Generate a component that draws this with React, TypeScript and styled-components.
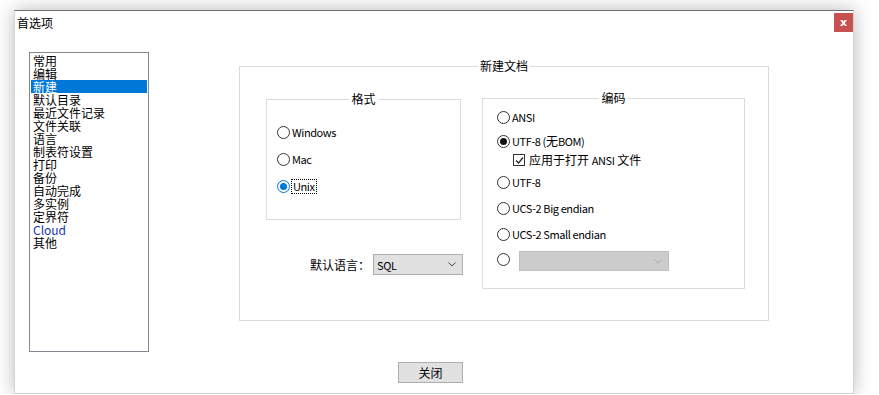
import styled, { createGlobalStyle } from "styled-components";

const GlobalStyle = createGlobalStyle`
  body {
    margin: 0;
    background: #fff;
    font-family: "Noto Sans CJK SC", "Noto Sans", sans-serif;
    font-size: 12px;
    color: #000;
  }
`;

const Dialog = styled.div`
  width: 840px;
  height: 384px;
  margin: 10px 0 0 14px;
  box-sizing: border-box;
  background: #fff;
  border: 1px solid #d4d4d4;
  border-top-color: #6f6f6f;
  box-shadow: 0 0 18px rgba(0, 0, 0, 0.28);
  display: flex;
  flex-direction: column;
`;

const TitleBar = styled.div`
  height: 30px;
  display: flex;
  justify-content: space-between;
  align-items: flex-start;
  padding-left: 2px;
`;

const Title = styled.div`
  margin-top: 2px;
  line-height: 20px;
`;

const CloseButton = styled.div`
  width: 19px;
  height: 19px;
  margin-top: 2px;
  background: #c75050;
  color: #fff;
  font-family: "DejaVu Sans", sans-serif;
  font-weight: bold;
  font-size: 11px;
  display: flex;
  align-items: center;
  justify-content: center;
`;

const Body = styled.div`
  display: flex;
  align-items: flex-start;
  padding: 11px 0 0 14px;
`;

const List = styled.ul`
  width: 120px;
  height: 300px;
  box-sizing: border-box;
  margin: 0;
  padding: 1px;
  list-style: none;
  border: 1px solid #828790;
`;

const ListItem = styled.li<{ $selected?: boolean; $link?: boolean }>`
  line-height: 13px;
  height: 13px;
  padding-left: 2px;
  background: ${(p) => (p.$selected ? "#0078d7" : "transparent")};
  color: ${(p) => (p.$selected ? "#fff" : p.$link ? "#1533b8" : "#000")};
`;

const Main = styled.div`
  margin: 7px 0 0 90px;
`;

const GroupBox = styled.fieldset<{ $w: number; $h: number }>`
  width: ${(p) => p.$w}px;
  height: ${(p) => p.$h}px;
  box-sizing: border-box;
  margin: 0;
  padding: 0;
  min-inline-size: 0;
  border: 1px solid #dcdcdc;
`;

const Legend = styled.legend`
  margin: 0 auto;
  padding: 0 2px;
  line-height: 14px;
`;

const OuterRow = styled.div`
  display: flex;
  align-items: flex-start;
  gap: 19px;
  padding: 18px 0 0 26px;
`;

const LeftColumn = styled.div`
  width: 197px;
  margin-top: 1px;
  display: flex;
  flex-direction: column;
`;

const FormatOptions = styled.div`
  display: flex;
  flex-direction: column;
  gap: 13px;
  padding: 19px 0 0 10px;
`;

const EncodingOptions = styled.div`
  display: flex;
  flex-direction: column;
  padding: 0 0 0 14px;
`;

const OptionRow = styled.div<{ $top?: number; $indent?: number }>`
  display: flex;
  align-items: center;
  gap: 2px;
  height: 14px;
  line-height: 14px;
  margin-top: ${(p) => p.$top ?? 0}px;
  padding-left: ${(p) => p.$indent ?? 0}px;
`;

// Latin captions in the dialog are set in a condensed face
const Latin = styled.span`
  font-size: 11px;
  letter-spacing: -0.4px;
`;

const OtherRow = styled.div`
  display: flex;
  align-items: flex-start;
  margin-top: 10px;
  height: 20px;
`;

const Radio = styled.span<{ $checked?: boolean; $focus?: boolean }>`
  width: 13px;
  height: 13px;
  box-sizing: border-box;
  border-radius: 50%;
  border: 1px solid ${(p) => (p.$focus ? "#0078d7" : "#333")};
  background: #fff;
  flex-shrink: 0;
  display: flex;
  align-items: center;
  justify-content: center;

  &::after {
    content: "";
    display: ${(p) => (p.$checked ? "block" : "none")};
    width: 7px;
    height: 7px;
    border-radius: 50%;
    background: ${(p) => (p.$focus ? "#0078d7" : "#111")};
  }
`;

const OtherRadio = styled(Radio)`
  margin-top: 2px;
`;

const FocusLabel = styled(Latin)`
  outline: 1px dotted #000;
  outline-offset: 0;
  padding: 0 1px;
  line-height: 13px;
`;

const Checkbox = styled.span`
  width: 12px;
  height: 12px;
  box-sizing: border-box;
  border: 1px solid #333;
  background: #fff;
  flex-shrink: 0;
  margin-right: 2px;
  display: flex;
  align-items: center;
  justify-content: center;
`;

const LanguageRow = styled.div`
  display: flex;
  justify-content: flex-end;
  align-items: center;
  gap: 3px;
  margin-top: 34px;
`;

const Select = styled.div<{ $w: number; $h: number; $disabled?: boolean }>`
  width: ${(p) => p.$w}px;
  height: ${(p) => p.$h}px;
  box-sizing: border-box;
  background: ${(p) => (p.$disabled ? "#cccccc" : "#e1e1e1")};
  border: 1px solid ${(p) => (p.$disabled ? "#bfbfbf" : "#adadad")};
  display: flex;
  align-items: center;
  justify-content: space-between;
  padding: 0 6px 0 3px;
  line-height: 14px;
`;

const DisabledSelect = styled(Select)`
  margin-left: 9px;
`;

const Footer = styled.div`
  display: flex;
  justify-content: center;
  padding-right: 7px;
  margin-top: 10px;
`;

const Button = styled.div`
  width: 65px;
  height: 21px;
  box-sizing: border-box;
  background: #e1e1e1;
  border: 1px solid #adadad;
  display: flex;
  align-items: center;
  justify-content: center;
  line-height: 14px;
`;

const Chevron = ({ color }: { color: string }) => (
  <svg width="8" height="5" viewBox="0 0 8 5">
    <polyline points="0.5,0.5 4,4 7.5,0.5" fill="none" stroke={color} strokeWidth="1" />
  </svg>
);

const CheckMark = () => (
  <svg width="9" height="9" viewBox="0 0 9 9">
    <polyline points="1,4.5 3.5,7 8,1.5" fill="none" stroke="#222" strokeWidth="1.2" />
  </svg>
);

const pages = [
  "常用",
  "编辑",
  "新建",
  "默认目录",
  "最近文件记录",
  "文件关联",
  "语言",
  "制表符设置",
  "打印",
  "备份",
  "自动完成",
  "多实例",
  "定界符",
  "Cloud",
  "其他",
];

const App = () => {
  return (
    <>
      <GlobalStyle />
      <Dialog>
        <TitleBar>
          <Title>首选项</Title>
          <CloseButton>x</CloseButton>
        </TitleBar>
        <Body>
          <List>
            {pages.map((p) => (
              <ListItem key={p} $selected={p === "新建"} $link={p === "Cloud"}>
                {p}
              </ListItem>
            ))}
          </List>
          <Main>
            <GroupBox $w={530} $h={262}>
              <Legend>新建文档</Legend>
              <OuterRow>
                <LeftColumn>
                  <GroupBox $w={195} $h={128}>
                    <Legend>格式</Legend>
                    <FormatOptions>
                      <OptionRow>
                        <Radio />
                        <Latin>Windows</Latin>
                      </OptionRow>
                      <OptionRow>
                        <Radio />
                        <Latin>Mac</Latin>
                      </OptionRow>
                      <OptionRow>
                        <Radio $checked $focus />
                        <FocusLabel>Unix</FocusLabel>
                      </OptionRow>
                    </FormatOptions>
                  </GroupBox>
                  <LanguageRow>
                    默认语言：
                    <Select $w={90} $h={21}>
                      <Latin>SQL</Latin>
                      <Chevron color="#444" />
                    </Select>
                  </LanguageRow>
                </LeftColumn>
                <GroupBox $w={263} $h={198}>
                  <Legend>编码</Legend>
                  <EncodingOptions>
                    <OptionRow $top={5}>
                      <Radio />
                      <Latin>ANSI</Latin>
                    </OptionRow>
                    <OptionRow $top={10}>
                      <Radio $checked />
                      <span>
                        <Latin>UTF-8 (</Latin>无<Latin>BOM)</Latin>
                      </span>
                    </OptionRow>
                    <OptionRow $top={5} $indent={16}>
                      <Checkbox>
                        <CheckMark />
                      </Checkbox>
                      <span>
                        应用于打开 <Latin>ANSI</Latin> 文件
                      </span>
                    </OptionRow>
                    <OptionRow $top={8}>
                      <Radio />
                      <Latin>UTF-8</Latin>
                    </OptionRow>
                    <OptionRow $top={12}>
                      <Radio />
                      <Latin>UCS-2 Big endian</Latin>
                    </OptionRow>
                    <OptionRow $top={12}>
                      <Radio />
                      <Latin>UCS-2 Small endian</Latin>
                    </OptionRow>
                    <OtherRow>
                      <OtherRadio />
                      <DisabledSelect $w={150} $h={20} $disabled>
                        <span />
                        <Chevron color="#a8a8a8" />
                      </DisabledSelect>
                    </OtherRow>
                  </EncodingOptions>
                </GroupBox>
              </OuterRow>
            </GroupBox>
          </Main>
        </Body>
        <Footer>
          <Button>关闭</Button>
        </Footer>
      </Dialog>
    </>
  );
};

export default App;
